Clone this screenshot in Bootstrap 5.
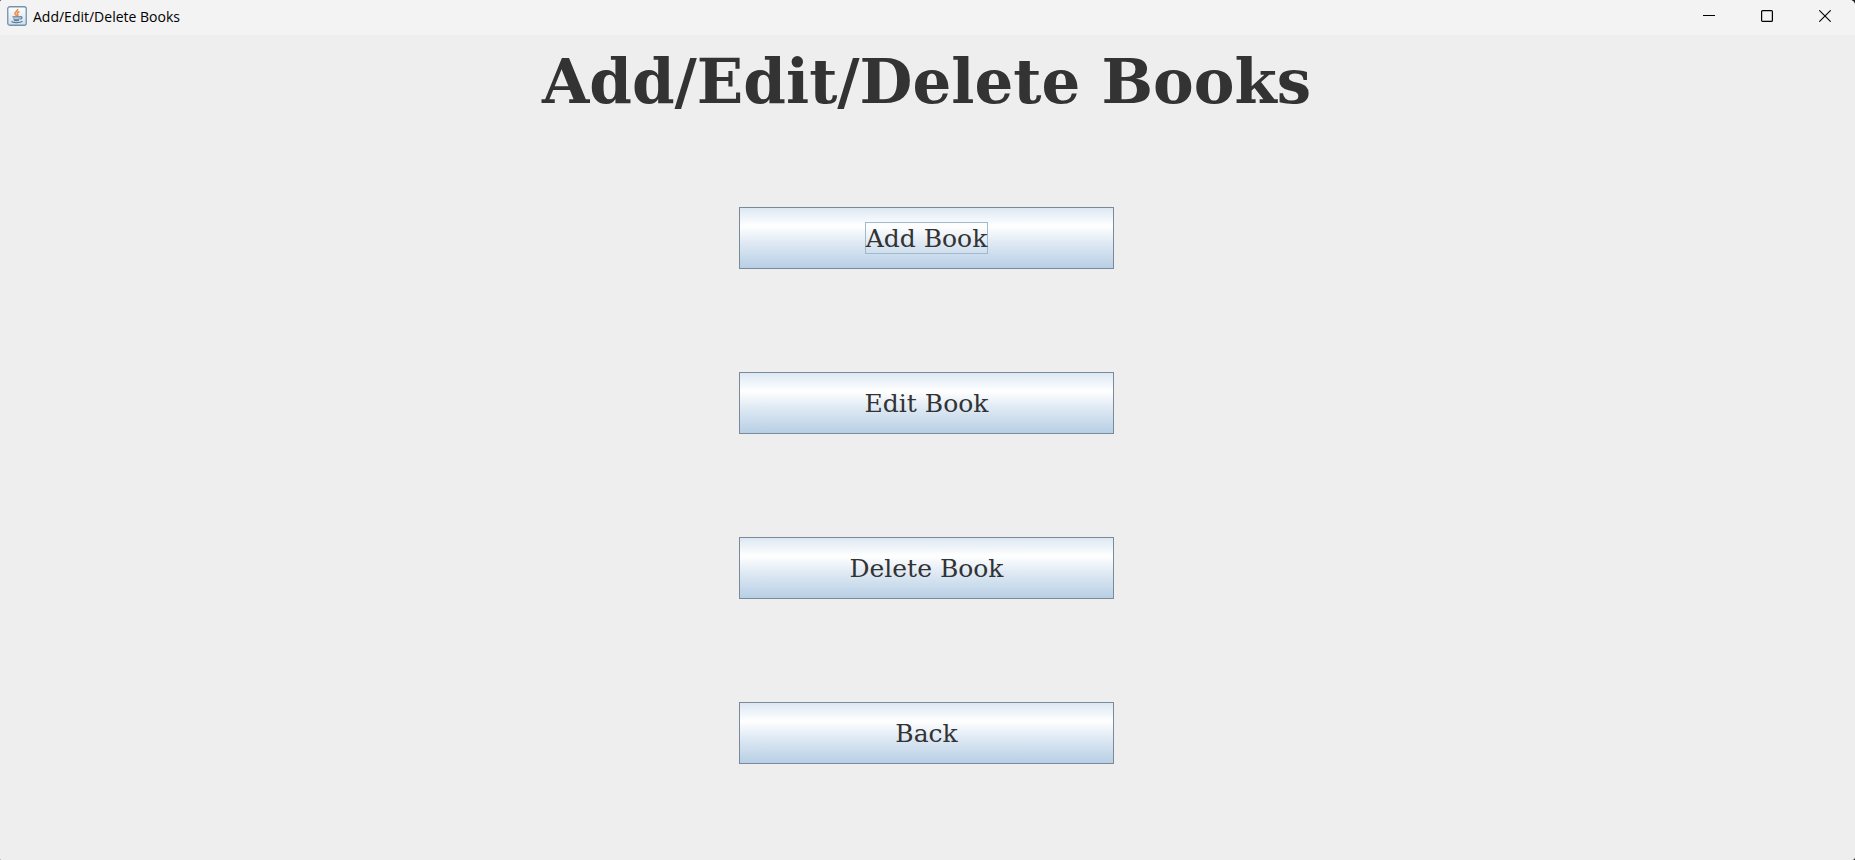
<!DOCTYPE html>
<html lang="en">
<head>
<meta charset="utf-8">
<meta name="viewport" content="width=device-width, initial-scale=1">
<title>Add/Edit/Delete Books</title>
<link href="https://cdn.jsdelivr.net/npm/bootstrap@5.3.0/dist/css/bootstrap.min.css" rel="stylesheet">
<style>
  html { background: #1c1c1c; }
  body { background: #eee; color: #333; border-radius: 2px 5px 3px 1px; }
  .title-bar { background: #f3f3f3; height: 35px; color: #000; font: 14px/22px "Open Sans", sans-serif; padding: 0 1px 0 7px; border-radius: 2px 5px 0 0; }
  .app-title { gap: 6px; padding-top: 6px; }
  .app-icon { margin-bottom: 2px; }
  .caption-btn { width: 58px; height: 32px; color: #000; }
  .caption-btn:hover { background: #e5e5e5; }
  .caption-btn svg, .app-icon { display: block; }
  .main-pane { padding: 11px 2px 96px 0; }
  .page-title { font: bold 61px/72px "DejaVu Serif", serif; margin-bottom: 89px; }
  .menu-list { gap: 103px; }
  .metal-btn {
    width: 375px; max-width: 100%; height: 62px;
    border: 1px solid #7a8a99; color: #333;
    background: linear-gradient(#dde8f3, #fff 30%, #dde8f3 60%, #b8cfe5);
    font: 25px/32px "DejaVu Serif", serif;
  }
  .metal-btn span { display: inline-block; border: 1px solid transparent; height: 32px; }
  .metal-btn.focused span { border-color: #a3b8cc; }
</style>
</head>
<body class="min-vh-100">
<header class="title-bar d-flex align-items-start">
  <div class="app-title d-flex align-items-center me-auto">
    <svg class="app-icon" width="20" height="20" viewBox="0 0 20 20" aria-hidden="true">
      <defs><linearGradient id="tile" x2="0" y2="1"><stop stop-color="#fff"/><stop offset="1" stop-color="#d3dee8"/></linearGradient></defs>
      <rect x=".75" y=".75" width="18.5" height="18.5" rx="2" fill="url(#tile)" stroke="#6f93b0" stroke-width="1.3"/>
      <path d="M10.6 3c.8 1.8-3.2 2.8-2.6 4.7.3.9 1.4 1.5 1.5 2.3M12.4 5.5c-2.3 1.1-2.7 1.8-1.6 3 .5.6.2 1.1-.4 1.6" fill="none" stroke="#ee8b45" stroke-width="1.5"/>
      <path d="M5.5 10.8h7.5M6.2 12.7c2 .7 4.5.7 6.5 0M7 14.3c1.5.5 3.5.5 5 0M4.5 15.5c2.5 1.5 8.500 1.500 11-.3M13 10.800c2.500-.6 2.600 1.700.2 2.300" fill="none" stroke="#557c9d" stroke-width="1.2"/>
    </svg>
    <span>Add/Edit/Delete Books</span>
  </div>
  <button type="button" class="caption-btn btn rounded-0 border-0 p-0 d-flex align-items-center justify-content-center" aria-label="Minimize">
    <svg width="12" height="12" viewBox="0 0 12 12"><path d="M0 5.5h12" stroke="currentColor"/></svg>
  </button>
  <button type="button" class="caption-btn btn rounded-0 border-0 p-0 d-flex align-items-center justify-content-center" aria-label="Maximize">
    <svg width="12" height="12" viewBox="0 0 12 12"><rect x=".6" y=".6" width="10.8" height="10.8" rx="1" fill="none" stroke="currentColor" stroke-width="1.2"/></svg>
  </button>
  <button type="button" class="caption-btn btn rounded-0 border-0 p-0 d-flex align-items-center justify-content-center" aria-label="Close">
    <svg width="12" height="12" viewBox="0 0 12 12"><path d="M.3.3l11.4 11.4M11.7.3L.3 11.7" stroke="currentColor" stroke-width="1.1"/></svg>
  </button>
</header>
<main class="main-pane text-center">
  <h1 class="page-title">Add/Edit/Delete Books</h1>
  <div class="menu-list d-flex flex-column align-items-center">
    <button type="button" class="metal-btn focused btn rounded-0 p-0"><span>Add Book</span></button>
    <button type="button" class="metal-btn btn rounded-0 p-0"><span>Edit Book</span></button>
    <button type="button" class="metal-btn btn rounded-0 p-0"><span>Delete Book</span></button>
    <button type="button" class="metal-btn btn rounded-0 p-0"><span>Back</span></button>
  </div>
</main>
<script src="https://cdn.jsdelivr.net/npm/bootstrap@5.3.0/dist/js/bootstrap.bundle.min.js"></script>
</body>
</html>
